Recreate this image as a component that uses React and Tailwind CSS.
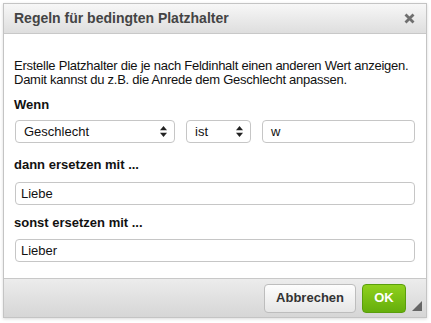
export default function App() {
  return (
    <div className="w-[431px] h-[323px] bg-white pt-[3px] pl-[3px]" style={{ fontFamily: '"Liberation Sans", Arial, sans-serif' }}>
      <div className="w-[424px] h-[315px] border border-[#c4c4c4] flex flex-col shadow-[0_1px_3px_rgba(0,0,0,0.15)]">
        <div className="h-[30px] flex items-center justify-between px-[10px] bg-gradient-to-b from-[#f7f7f7] to-[#dedede] border-b border-[#c8c8c8]">
          <span className="text-[14px] font-bold text-[#444]">Regeln für bedingten Platzhalter</span>
          <svg width="11" height="11" viewBox="0 0 11 11" className="mr-[1px]">
            <path d="M1.5 1.5L9.5 9.5M9.5 1.5L1.5 9.5" stroke="#6f6f6f" strokeWidth="2.8" />
          </svg>
        </div>
        <div className="flex-1 bg-white px-[11px] pt-[25px] text-[13px] text-[#111]">
          <p className="leading-[14px] -ml-[1px] whitespace-nowrap tracking-[-0.25px]">
            Erstelle Platzhalter die je nach Feldinhalt einen anderen Wert anzeigen.<br />
            Damit kannst du z.B. die Anrede dem Geschlecht anpassen.
          </p>
          <div className="font-bold mt-[10px] leading-[15px] -ml-[1px]">Wenn</div>
          <div className="flex gap-[11px] mt-[8px]">
            <div className="w-[160px] h-[23px] border border-[#c6c6c6] rounded-[4px] flex items-center justify-between pl-[8px] pr-[7px]">
              <span>Geschlecht</span>
              <Arrows />
            </div>
            <div className="w-[65px] h-[23px] border border-[#c6c6c6] rounded-[4px] flex items-center justify-between pl-[8px] pr-[7px]">
              <span>ist</span>
              <Arrows />
            </div>
            <div className="flex-1 h-[23px] border border-[#c6c6c6] rounded-[4px] flex items-center pl-[8px]">w</div>
          </div>
          <div className="font-bold mt-[14px] leading-[15px] -ml-[1px]">dann ersetzen mit ...</div>
          <div className="h-[23px] mt-[10px] border border-[#c6c6c6] rounded-[4px] flex items-center pl-[5px]">Liebe</div>
          <div className="font-bold mt-[10px] leading-[15px] -ml-[1px]">sonst ersetzen mit ...</div>
          <div className="h-[23px] mt-[9px] border border-[#c6c6c6] rounded-[4px] flex items-center pl-[5px]">Lieber</div>
        </div>
        <div className="h-[39px] border-t border-[#c8c8c8] bg-gradient-to-b from-[#ececec] to-[#d6d6d6] flex items-center justify-end pr-[20px] gap-[6px] relative">
          <button className="h-[29px] px-[11px] rounded-[4px] border border-[#bdbdbd] bg-gradient-to-b from-[#fdfdfd] to-[#e6e6e6] text-[13px] font-bold text-[#333]">Abbrechen</button>
          <button className="h-[29px] w-[44px] rounded-[4px] border border-[#5a9e0c] bg-gradient-to-b from-[#8fd11c] to-[#65ae0c] text-[13px] font-bold text-white">OK</button>
          <svg width="10" height="10" viewBox="0 0 10 10" className="absolute right-[4px] bottom-[6px]">
            <path d="M10 0L10 10L0 10Z" fill="#666" />
          </svg>
        </div>
      </div>
    </div>
  );
}

function Arrows() {
  return (
    <svg width="7" height="11" viewBox="0 0 7 11">
      <path d="M3.5 0L7 4.2H0Z" fill="#222" />
      <path d="M3.5 11L7 6.8H0Z" fill="#222" />
    </svg>
  );
}
